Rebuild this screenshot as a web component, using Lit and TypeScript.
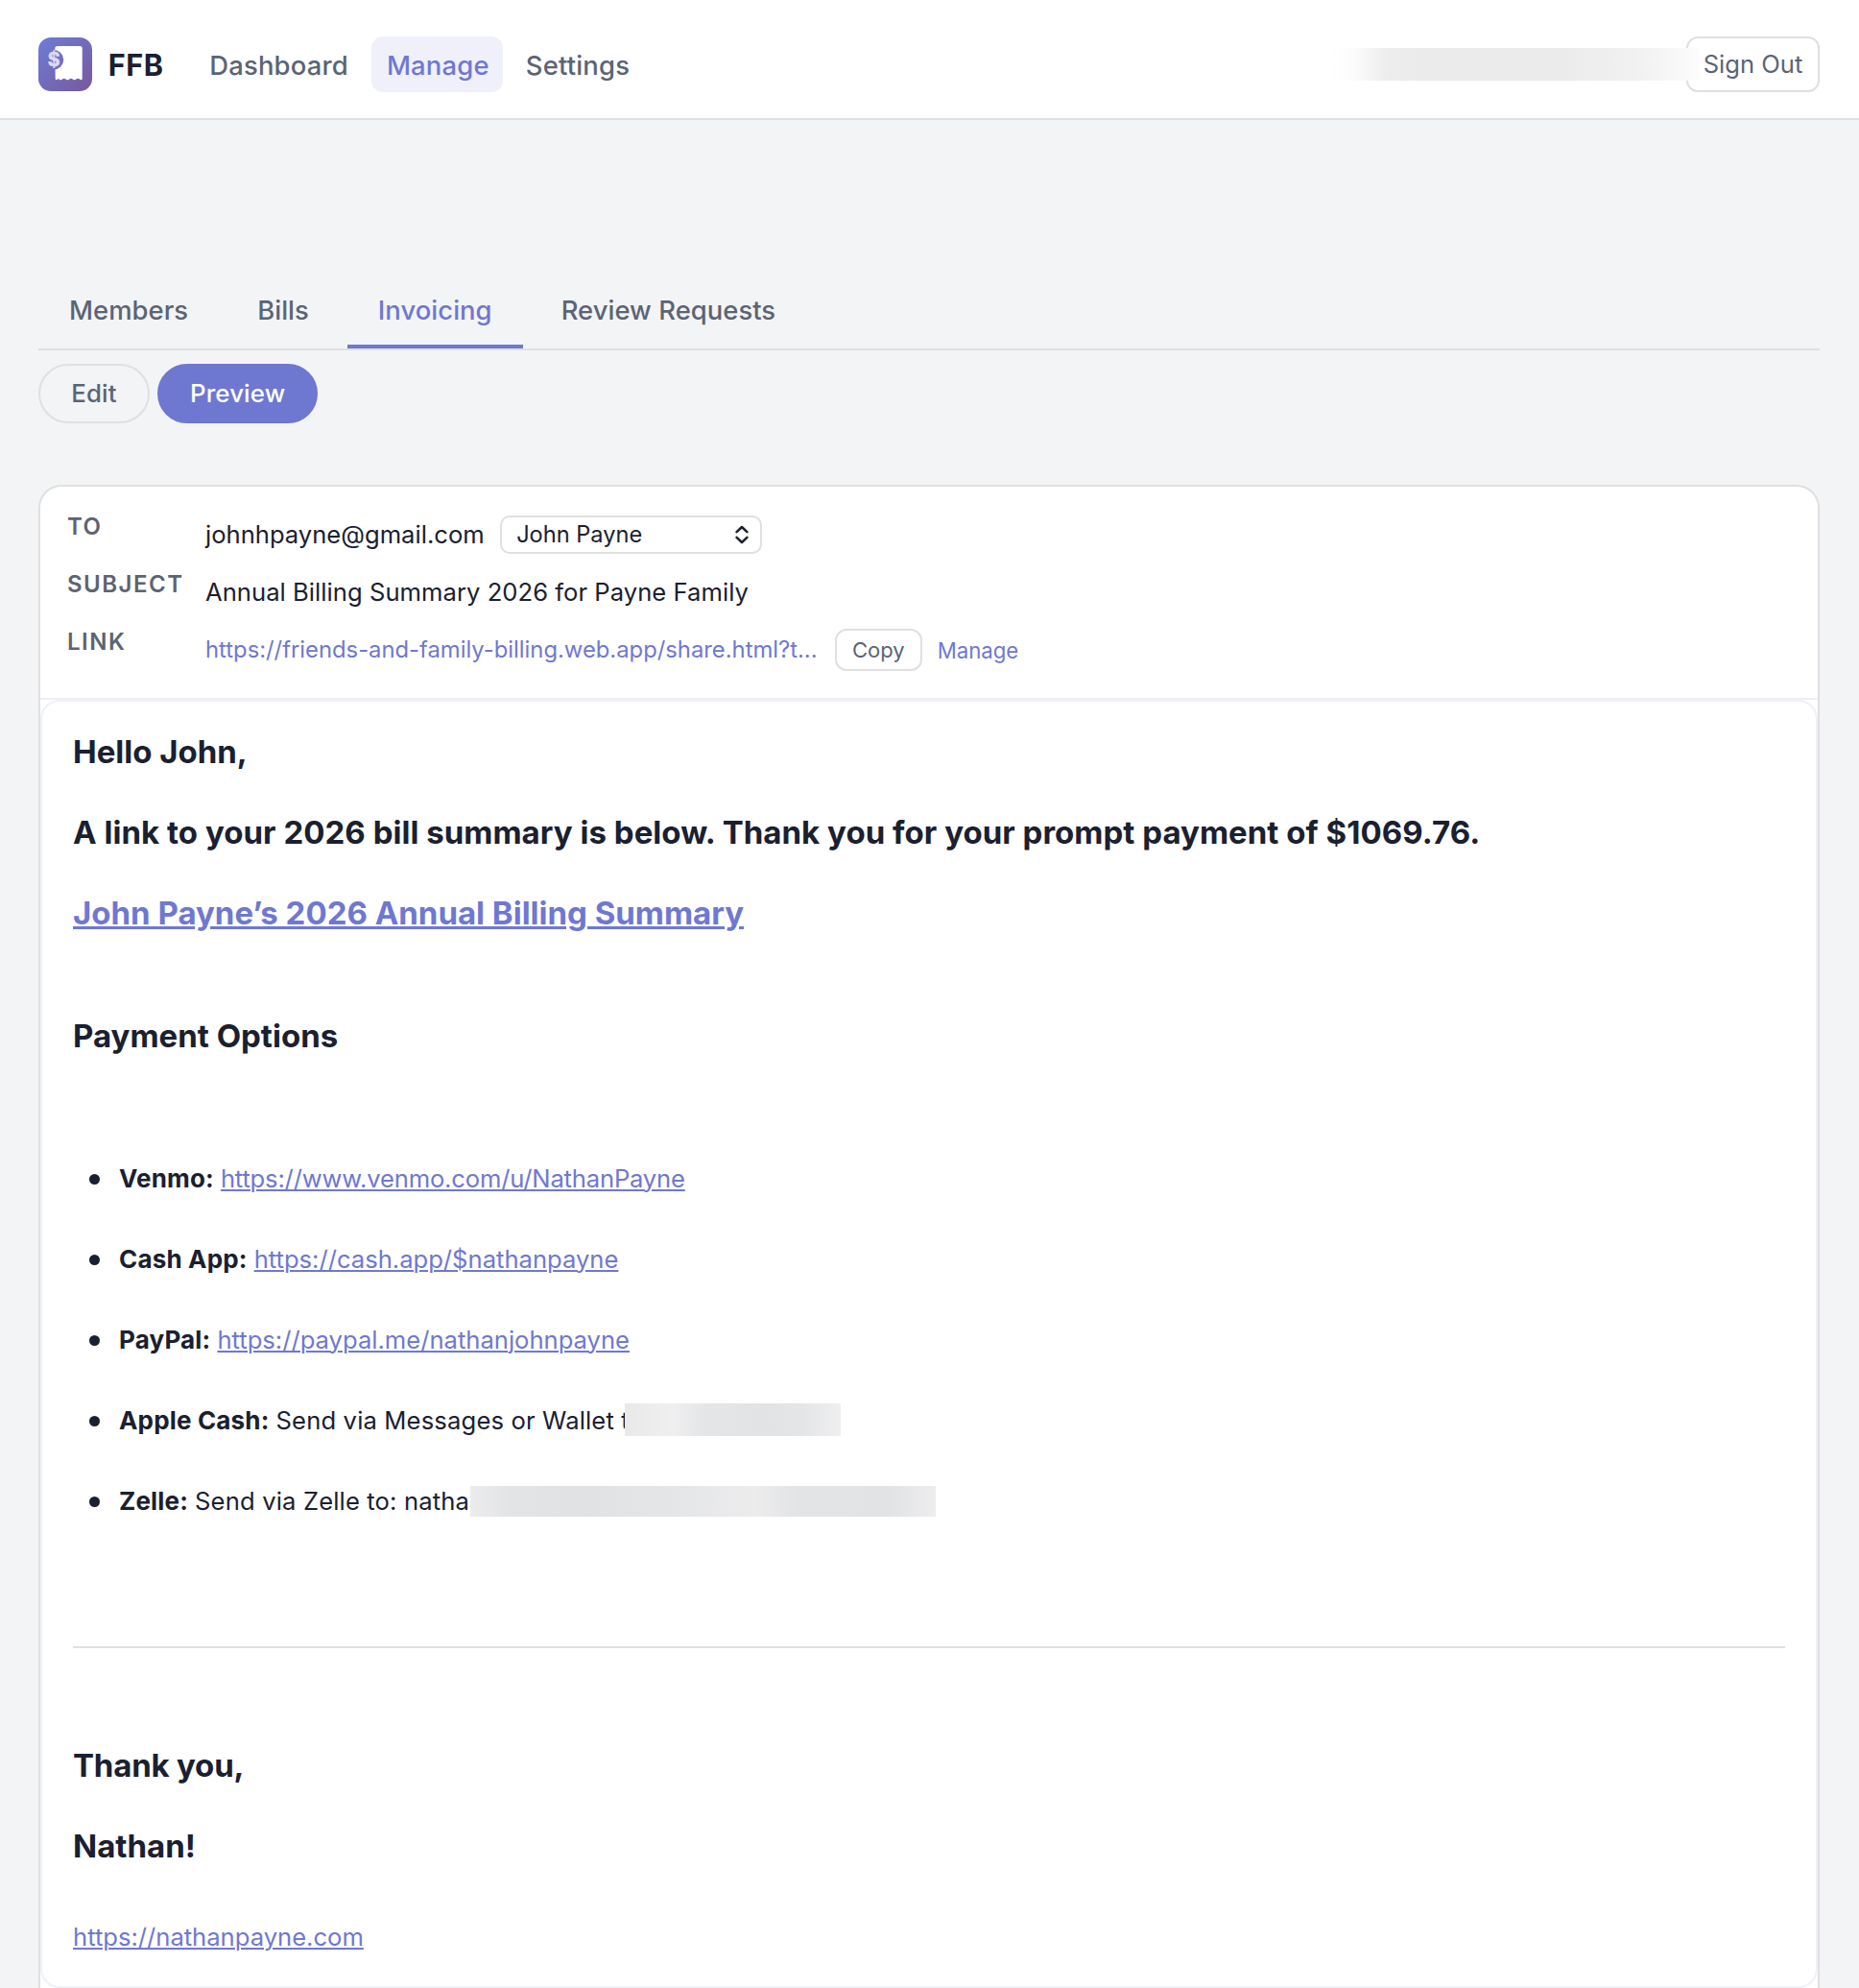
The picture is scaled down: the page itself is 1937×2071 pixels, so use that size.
import { LitElement, html, svg, css, nothing } from "lit";
import { customElement, property, state } from "lit/decorators.js";
import { classMap } from "lit/directives/class-map.js";

interface PaymentOption {
  name: string;
  url?: string;
  note?: string;
  redacted?: "short" | "long";
}

const NAV = ["Dashboard", "Manage", "Settings"];
const TABS = ["Members", "Bills", "Invoicing", "Review Requests"];
const OPTIONS: PaymentOption[] = [
  { name: "Venmo:", url: "https://www.venmo.com/u/NathanPayne" },
  { name: "Cash App:", url: "https://cash.app/$nathanpayne" },
  { name: "PayPal:", url: "https://paypal.me/nathanjohnpayne" },
  { name: "Apple Cash:", note: "Send via Messages or Wallet t", redacted: "short" },
  { name: "Zelle:", note: "Send via Zelle to: natha", redacted: "long" },
];

@customElement("ffb-logo")
class FfbLogo extends LitElement {
  static styles = css`
    :host { display: block; width: 56px; height: 56px; }
    svg { display: block; }
    .sign { font: 700 19.5px Inter, sans-serif; fill: #dcdaf0; stroke: #dcdaf0; stroke-width: 0.6; stroke-linejoin: round; }
  `;
  render() {
    return html`<svg width="56" height="56" viewBox="0 0 56 56" aria-hidden="true">
      ${svg`
        <defs>
          <linearGradient id="bg" x1="0" y1="0" x2="1" y2="1">
            <stop offset="0" stop-color="#6d7dd4"></stop>
            <stop offset="1" stop-color="#78589f"></stop>
          </linearGradient>
          <mask id="cut">
            <rect width="56" height="56" fill="#fff"></rect>
            <circle cx="16" cy="23.3" r="10.2" fill="#000"></circle>
          </mask>
        </defs>
        <rect width="56" height="56" rx="13" fill="url(#bg)"></rect>
        <path mask="url(#cut)" fill="#fff"
          d="M17.3 11.5a2.5 2.5 0 0 1 2.5-2.5h23.4a2.5 2.5 0 0 1 2.5 2.5V43.4q-1 1.4-2.4 .3q-2.2-1.9-4.2 0q-1.6 1-3 0q-2.2-1.9-4.2 0q-1.6 1-3 0q-2.2-1.9-4.2 0q-1.6 1-3 0q-1.3-1.2-2 0q-1.4 1-2-.3z"></path>
        <text class="sign" x="16.1" y="30.4" text-anchor="middle">$</text>
      `}
    </svg>`;
  }
}

@customElement("ffb-header")
class FfbHeader extends LitElement {
  static styles = css`
    :host {
      display: flex; align-items: center; height: 58px; padding: 38px 41px 27px 40px;
      background: #fff; border-bottom: 2px solid #e0e0e0;
    }
    .brand { margin-left: 16.7px; font-size: 30.6px; font-weight: 700; letter-spacing: 0.6px; color: #1a2030; }
    nav { display: flex; gap: 8px; margin-left: 31.6px; }
    .item {
      box-sizing: border-box; height: 58px; padding: 2px 16px 0; line-height: 56px; border-radius: 12px;
      font-size: 27.4px; font-weight: 500; letter-spacing: 0.2px; color: #5b6474;
    }
    .active { background: #f0f0fa; color: #6f78d0; padding-right: 14px; }
    .account { display: flex; align-items: center; margin-left: auto; }
    .redacted {
      position: relative; width: 385px; height: 34px; margin-right: -13px;
      background: linear-gradient(90deg, #fff 0, #fcfcfc 25px, #ededed 60px, #ebebeb 100px, #ebebeb 240px, #f1f1f1 320px, #fafafa 372px, #fcfcfc 385px);
    }
    .out {
      box-sizing: border-box; height: 58px; line-height: 54px; width: 139px; text-align: center;
      border: 2px solid #e0e0e0; border-radius: 12px; font-size: 25.6px; color: #5b6474;
    }
  `;
  @state() private current = "Manage";
  render() {
    return html`
      <ffb-logo></ffb-logo>
      <span class="brand">FFB</span>
      <nav>
        ${NAV.map((n) => html`<span class=${classMap({ item: true, active: n === this.current })}>${n}</span>`)}
      </nav>
      <div class="account">
        <span class="redacted"></span>
        <span class="out">Sign Out</span>
      </div>
    `;
  }
}

@customElement("ffb-envelope")
class FfbEnvelope extends LitElement {
  static styles = css`
    :host {
      display: grid; grid-template-columns: 128px 1fr; grid-auto-rows: 44px; gap: 16px;
      padding: 28px; border-bottom: 2px solid #efeff1;
    }
    .label { line-height: 27px; font-size: 24px; font-weight: 600; letter-spacing: 1.5px; color: #5b6474; }
    .value { display: flex; align-items: center; gap: 16px; font-size: 25.6px; color: #1a2030; }
    .text { padding-bottom: 2px; }
    .subject { letter-spacing: 0.04px; }
    .select {
      box-sizing: border-box; display: flex; align-items: center; justify-content: space-between;
      width: 273px; height: 40px; padding: 0 12px 0 15.5px; border: 2px solid #e0e0e0; border-radius: 10px;
      font-size: 23.6px;
    }
    .url { width: 640px; padding-bottom: 1px; font-size: 23.8px; color: #6f78d0; white-space: nowrap; }
    .copy {
      box-sizing: border-box; height: 44px; line-height: 40px; padding: 0 16px;
      border: 2px solid #e0e0e0; border-radius: 12px; font-size: 22px; color: #5b6474;
    }
    .manage { font-size: 22.2px; color: #6f78d0; }
  `;
  render() {
    return html`
      <span class="label">TO</span>
      <div class="value">
        <span class="text">johnhpayne@gmail.com</span>
        <div class="select">
          <span class="text">John Payne</span>
          <svg width="14" height="20" viewBox="0 0 14 20" fill="none" stroke="#1a2030" stroke-width="2.5" stroke-linecap="round" stroke-linejoin="round">
            <path d="M1.6 7.2 7 2l5.4 5.2M1.6 12.8 7 18l5.4-5.2"></path>
          </svg>
        </div>
      </div>
      <span class="label">SUBJECT</span>
      <div class="value"><span class="text subject">Annual Billing Summary 2026 for Payne Family</span></div>
      <span class="label">LINK</span>
      <div class="value">
        <span class="url">https://friends-and-family-billing.web.app/share.html?t...</span>
        <span class="copy">Copy</span>
        <span class="manage">Manage</span>
      </div>
    `;
  }
}

@customElement("ffb-message")
class FfbMessage extends LitElement {
  static styles = css`
    :host {
      display: block; padding: 10px 32px 30px; border: 2px solid #f0f0fa; border-radius: 20px;
      background: #fff; color: #1a2030; font-size: 25.6px;
    }
    p, h2, ul { margin: 0; padding: 0; }
    .big { font-size: 33px; font-weight: 700; line-height: 84px; }
    .link { color: #6f78d0; text-decoration: underline; text-underline-offset: 2px; text-decoration-thickness: 2px; }
    .big .link { text-decoration-thickness: 3px; }
    .summary { letter-spacing: 0.03px; }
    h2.big { margin-top: 44px; }
    ul { margin: 64px 0 110px; list-style: none; }
    li { display: flex; align-items: center; height: 84px; }
    .dot { width: 11px; height: 11px; margin: 2px 20px 0 17px; border-radius: 50%; background: #1a2030; }
    .name { margin-right: 7px; font-size: 26px; font-weight: 700; letter-spacing: 0.17px; }
    .note { letter-spacing: 0.15px; white-space: nowrap; }
    .venmo { letter-spacing: -0.18px; }
    .redacted { position: relative; }
    .short {
      width: 225px; height: 34px; margin-left: -5px;
      background: linear-gradient(90deg, #e9e9ea, #efeff0 22%, #e4e5e7 38%, #e2e3e5 65%, #e4e5e7 82%, #efeff0);
    }
    .long {
      width: 485px; height: 32px; margin: 2px 0 0 1px;
      background: linear-gradient(90deg, #ececed, #e3e4e6 8%, #e1e2e4 25%, #e5e6e8 45%, #ececed 61%, #e3e4e6 70%, #e2e3e5 90%, #ededee);
    }
    .rule { height: 2px; background: #e0e0e0; }
    .close { margin-top: 80px; letter-spacing: -0.2px; }
    .site { margin-top: 32px; line-height: 42px; }
  `;
  render() {
    return html`
      <p class="big">Hello John,</p>
      <p class="big summary">A link to your 2026 bill summary is below. Thank you for your prompt payment of $1069.76.</p>
      <p class="big"><span class="link">John Payne’s 2026 Annual Billing Summary</span></p>
      <h2 class="big">Payment Options</h2>
      <ul>
        ${OPTIONS.map((o) => html`<li>
          <span class="dot"></span>
          <span class="name">${o.name}</span>
          ${o.url ? html`<span class=${classMap({ link: true, venmo: o.name === "Venmo:" })}>${o.url}</span>` : nothing}
          ${o.note ? html`<span class="note">${o.note}</span>` : nothing}
          ${o.redacted ? html`<span class="redacted ${o.redacted}"></span>` : nothing}
        </li>`)}
      </ul>
      <div class="rule"></div>
      <p class="big close">Thank you,</p>
      <p class="big">Nathan!</p>
      <p class="site"><span class="link">https://nathanpayne.com</span></p>
    `;
  }
}

@customElement("app-root")
class AppRoot extends LitElement {
  static styles = css`
    :host {
      display: block; height: 2071px; overflow: hidden; background: #f3f4f6;
      font-family: Inter, "Liberation Sans", sans-serif;
    }
    main { padding: 158px 41px 0 40px; }
    .tabs { display: flex; gap: 8px; border-bottom: 2px solid #e0e0e0; }
    .tab {
      padding: 20px 32px 16px; line-height: 40px; border-bottom: 4px solid transparent;
      font-size: 27.4px; font-weight: 500; letter-spacing: 0.05px; color: #5b6474;
    }
    .tab.active { color: #6f78d0; border-color: #6f78d0; }
    .modes { display: flex; gap: 8px; margin: 14px 0 64px; }
    .mode {
      box-sizing: border-box; min-width: 116px; height: 62px; line-height: 58px; padding: 0 32px;
      border: 2px solid #e0e0e0; border-radius: 31px; text-align: center;
      font-size: 25.8px; font-weight: 500; letter-spacing: 0.15px; color: #5b6474;
    }
    .mode.active { background: #6f78d0; border-color: #6f78d0; color: #fff; }
    .card {
      border: 2px solid #e0e0e0; border-bottom: 0; border-radius: 24px 24px 0 0; background: #fff;
    }
  `;
  @property() tab = "Invoicing";
  @property() mode = "Preview";
  render() {
    return html`
      <ffb-header></ffb-header>
      <main>
        <div class="tabs">
          ${TABS.map((t) => html`<span class=${classMap({ tab: true, active: t === this.tab })}>${t}</span>`)}
        </div>
        <div class="modes">
          ${["Edit", "Preview"].map((m) => html`<span class=${classMap({ mode: true, active: m === this.mode })}>${m}</span>`)}
        </div>
        <section class="card">
          <ffb-envelope></ffb-envelope>
          <ffb-message></ffb-message>
        </section>
      </main>
    `;
  }
}
